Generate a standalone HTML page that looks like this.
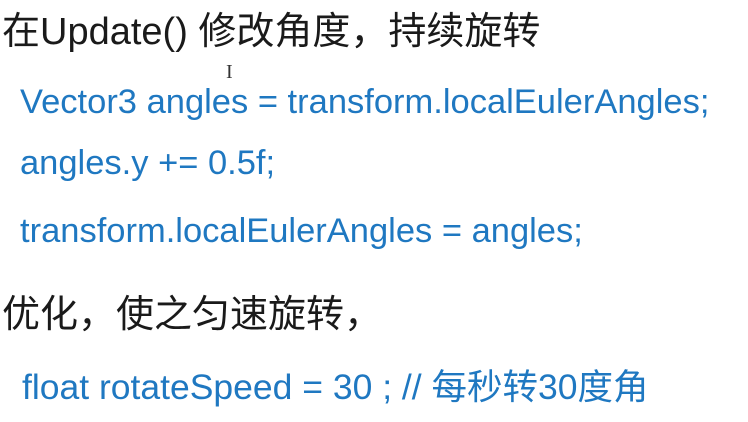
<!DOCTYPE html>
<html><head><meta charset="utf-8"><style>
body{margin:0;width:748px;height:422px;background:#fff;position:relative;overflow:hidden}
div{position:absolute;white-space:nowrap;line-height:1}
.h{font-family:"Liberation Sans","Noto Sans CJK SC",sans-serif;font-size:38px;color:#1a1a1a;left:2px}
.c{font-family:"Liberation Sans","Noto Sans CJK SC",sans-serif;font-size:34.5px;color:#1f78c1;left:20px}
</style></head><body>
<div class="h" style="top:13px">在Update() 修改角度，持续旋转</div>
<div style="left:226px;top:62px;font-family:'Liberation Serif',serif;font-size:20px;color:#333">I</div>
<div class="c" style="top:85px">Vector3 angles = transform.localEulerAngles;</div>
<div class="c" style="top:146px">angles.y += 0.5f;</div>
<div class="c" style="top:214px">transform.localEulerAngles = angles;</div>
<div class="h" style="top:296px">优化，使之匀速旋转，</div>
<div class="c" style="top:370px;left:22px;font-size:35.5px">float rotateSpeed = 30 ; // 每秒转30度角</div>
</body></html>
